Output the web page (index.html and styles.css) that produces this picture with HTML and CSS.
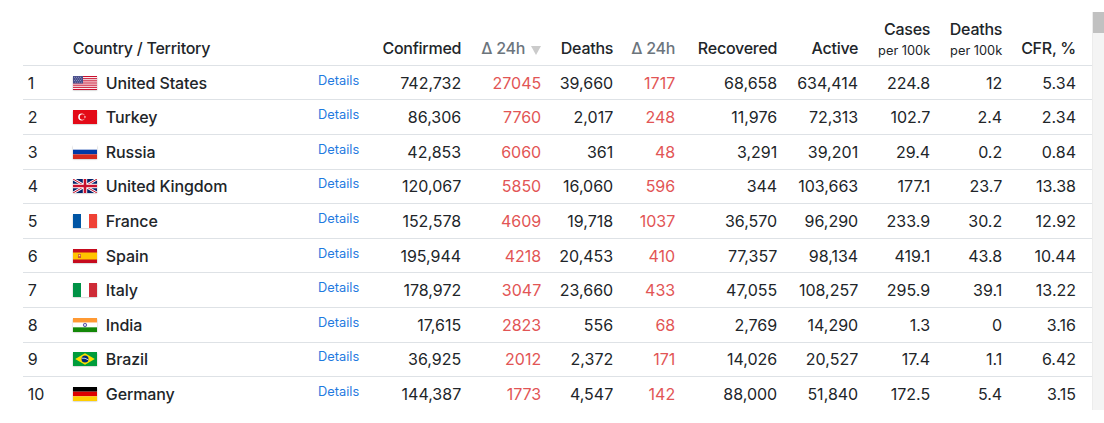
FILE: index.html
```html
<!DOCTYPE html>
<html lang="en">
<head>
<meta charset="utf-8">
<title>COVID-19 cases by country</title>
<link rel="stylesheet" href="styles.css">
</head>
<body>
<div class="frame">
<div class="viewport">
<table class="cases">
<colgroup>
<col class="c-idx"><col class="c-country"><col class="c-details"><col class="c-conf"><col class="c-d24"><col class="c-deaths"><col class="c-dd24"><col class="c-rec"><col class="c-act"><col class="c-cp"><col class="c-dp"><col class="c-cfr">
</colgroup>
<thead>
<tr>
<th></th>
<th class="left">Country / Territory</th>
<th></th>
<th>Confirmed</th>
<th class="muted">Δ 24h<svg class="sort" viewBox="0 0 10 9" width="10" height="9"><polygon points="0,0 10,0 5,9"/></svg></th>
<th>Deaths</th>
<th class="muted">Δ 24h</th>
<th>Recovered</th>
<th>Active</th>
<th>Cases<small class="sub">per 100k</small></th>
<th>Deaths<small class="sub">per 100k</small></th>
<th class="last">CFR, %</th>
</tr>
</thead>
<tbody>
<tr>
<td class="left">1</td>
<td class="left name"><svg class="flag" viewBox="0 0 24 14" width="24" height="14"><rect width="24" height="14" fill="#fff"/><g fill="#c8102e"><rect y="0" width="24" height="1.08"/><rect y="2.15" width="24" height="1.08"/><rect y="4.31" width="24" height="1.08"/><rect y="6.46" width="24" height="1.08"/><rect y="8.62" width="24" height="1.08"/><rect y="10.77" width="24" height="1.08"/><rect y="12.92" width="24" height="1.08"/></g><rect width="10" height="7.5" fill="#4a4f8c"/><g fill="#c9cde6"><circle cx="1.5" cy="1.3" r=".45"/><circle cx="3.5" cy="1.3" r=".45"/><circle cx="5.5" cy="1.3" r=".45"/><circle cx="7.5" cy="1.3" r=".45"/><circle cx="2.5" cy="2.9" r=".45"/><circle cx="4.5" cy="2.9" r=".45"/><circle cx="6.5" cy="2.9" r=".45"/><circle cx="8.5" cy="2.9" r=".45"/><circle cx="1.5" cy="4.5" r=".45"/><circle cx="3.5" cy="4.5" r=".45"/><circle cx="5.5" cy="4.5" r=".45"/><circle cx="7.5" cy="4.5" r=".45"/><circle cx="2.5" cy="6.1" r=".45"/><circle cx="4.5" cy="6.1" r=".45"/><circle cx="6.5" cy="6.1" r=".45"/><circle cx="8.5" cy="6.1" r=".45"/></g></svg>United States</td>
<td class="details"><a href="#">Details</a></td>
<td>742,732</td><td class="red">27045</td><td>39,660</td><td class="red">1717</td><td>68,658</td><td>634,414</td><td>224.8</td><td>12</td><td class="last">5.34</td>
</tr>
<tr>
<td class="left">2</td>
<td class="left name"><svg class="flag" viewBox="0 0 24 14" width="24" height="14"><rect width="24" height="14" fill="#e30a17"/><circle cx="8.6" cy="7" r="3.4" fill="#fff"/><circle cx="9.5" cy="7" r="2.7" fill="#e30a17"/><polygon points="13.2,7 10.9,7.8 12.3,5.8 12.3,8.2 10.9,6.2" fill="#fff"/></svg>Turkey</td>
<td class="details"><a href="#">Details</a></td>
<td>86,306</td><td class="red">7760</td><td>2,017</td><td class="red">248</td><td>11,976</td><td>72,313</td><td>102.7</td><td>2.4</td><td class="last">2.34</td>
</tr>
<tr>
<td class="left">3</td>
<td class="left name"><svg class="flag" viewBox="0 0 24 14" width="24" height="14"><rect width="24" height="4.67" fill="#fff"/><rect y="4.67" width="24" height="4.67" fill="#0039a6"/><rect y="9.33" width="24" height="4.67" fill="#d52b1e"/></svg>Russia</td>
<td class="details"><a href="#">Details</a></td>
<td>42,853</td><td class="red">6060</td><td>361</td><td class="red">48</td><td>3,291</td><td>39,201</td><td>29.4</td><td>0.2</td><td class="last">0.84</td>
</tr>
<tr>
<td class="left">4</td>
<td class="left name"><svg class="flag" viewBox="0 0 24 14" width="24" height="14"><rect width="24" height="14" fill="#012169"/><path d="M0,0 L24,14 M24,0 L0,14" stroke="#fff" stroke-width="2.8"/><path d="M0,0 L24,14 M24,0 L0,14" stroke="#c8102e" stroke-width="1"/><path d="M12,0 V14 M0,7 H24" stroke="#fff" stroke-width="4.4"/><path d="M12,0 V14 M0,7 H24" stroke="#c8102e" stroke-width="2.6"/></svg>United Kingdom</td>
<td class="details"><a href="#">Details</a></td>
<td>120,067</td><td class="red">5850</td><td>16,060</td><td class="red">596</td><td>344</td><td>103,663</td><td>177.1</td><td>23.7</td><td class="last">13.38</td>
</tr>
<tr>
<td class="left">5</td>
<td class="left name"><svg class="flag" viewBox="0 0 24 14" width="24" height="14"><rect width="8" height="14" fill="#0055a4"/><rect x="8" width="8" height="14" fill="#fff"/><rect x="16" width="8" height="14" fill="#ef4135"/></svg>France</td>
<td class="details"><a href="#">Details</a></td>
<td>152,578</td><td class="red">4609</td><td>19,718</td><td class="red">1037</td><td>36,570</td><td>96,290</td><td>233.9</td><td>30.2</td><td class="last">12.92</td>
</tr>
<tr>
<td class="left">6</td>
<td class="left name"><svg class="flag" viewBox="0 0 24 14" width="24" height="14"><rect width="24" height="14" fill="#c60b1e"/><rect y="3.5" width="24" height="7" fill="#ffc400"/><rect x="5" y="5" width="3" height="4" rx=".6" fill="#c8553a"/><rect x="5.8" y="5.8" width="1.4" height="1.4" fill="#f7e3a0"/></svg>Spain</td>
<td class="details"><a href="#">Details</a></td>
<td>195,944</td><td class="red">4218</td><td>20,453</td><td class="red">410</td><td>77,357</td><td>98,134</td><td>419.1</td><td>43.8</td><td class="last">10.44</td>
</tr>
<tr>
<td class="left">7</td>
<td class="left name"><svg class="flag" viewBox="0 0 24 14" width="24" height="14"><rect width="8" height="14" fill="#009246"/><rect x="8" width="8" height="14" fill="#fff"/><rect x="16" width="8" height="14" fill="#ce2b37"/></svg>Italy</td>
<td class="details"><a href="#">Details</a></td>
<td>178,972</td><td class="red">3047</td><td>23,660</td><td class="red">433</td><td>47,055</td><td>108,257</td><td>295.9</td><td>39.1</td><td class="last">13.22</td>
</tr>
<tr>
<td class="left">8</td>
<td class="left name"><svg class="flag" viewBox="0 0 24 14" width="24" height="14"><rect width="24" height="4.67" fill="#ff9933"/><rect y="4.67" width="24" height="4.67" fill="#fff"/><rect y="9.33" width="24" height="4.67" fill="#138808"/><circle cx="12" cy="7" r="1.7" fill="none" stroke="#000080" stroke-width=".6"/><circle cx="12" cy="7" r=".5" fill="#000080"/></svg>India</td>
<td class="details"><a href="#">Details</a></td>
<td>17,615</td><td class="red">2823</td><td>556</td><td class="red">68</td><td>2,769</td><td>14,290</td><td>1.3</td><td>0</td><td class="last">3.16</td>
</tr>
<tr>
<td class="left">9</td>
<td class="left name"><svg class="flag" viewBox="0 0 24 14" width="24" height="14"><rect width="24" height="14" fill="#009c3b"/><polygon points="2.2,7 12,1.3 21.8,7 12,12.7" fill="#ffdf00"/><circle cx="12" cy="7" r="3.5" fill="#002776"/><path d="M8.7,6.2 Q12,5.6 15.3,7.8" stroke="#fff" stroke-width=".8" fill="none"/></svg>Brazil</td>
<td class="details"><a href="#">Details</a></td>
<td>36,925</td><td class="red">2012</td><td>2,372</td><td class="red">171</td><td>14,026</td><td>20,527</td><td>17.4</td><td>1.1</td><td class="last">6.42</td>
</tr>
<tr>
<td class="left">10</td>
<td class="left name"><svg class="flag" viewBox="0 0 24 14" width="24" height="14"><rect width="24" height="4.67" fill="#000"/><rect y="4.67" width="24" height="4.67" fill="#dd0000"/><rect y="9.33" width="24" height="4.67" fill="#ffce00"/></svg>Germany</td>
<td class="details"><a href="#">Details</a></td>
<td>144,387</td><td class="red">1773</td><td>4,547</td><td class="red">142</td><td>88,000</td><td>51,840</td><td>172.5</td><td>5.4</td><td class="last">3.15</td>
</tr>
</tbody>
</table>
</div>
<div class="scrollbar"><div class="thumb"></div></div>
</div>
</body>
</html>
```

FILE: styles.css
```css
html, body {
  margin: 0;
  background: #fff;
}

body {
  font-family: Inter, "Liberation Sans", sans-serif;
  font-size: 16px;
  line-height: 1.5;
  color: #212529;
}

.frame {
  display: flex;
  margin-top: 12px;
  height: 398px;
}

.viewport {
  flex: 1;
  min-width: 0;
  overflow: hidden;
  padding-left: 23px;
}

.scrollbar {
  width: 12px;
  flex: none;
  background: #f4f4f4;
  border-left: 1px solid #ececec;
  box-sizing: border-box;
}

.thumb {
  height: 21px;
  background: #c1c1c1;
}

.cases {
  width: 1069px;
  table-layout: fixed;
  border-collapse: collapse;
}

.c-idx { width: 45px; }
.c-country { width: 242px; }
.c-details { width: 54px; }
.c-conf { width: 102px; }
.c-d24 { width: 80px; }
.c-deaths { width: 72px; }
.c-dd24 { width: 62px; }
.c-rec { width: 102px; }
.c-act { width: 81px; }
.c-cp { width: 72px; }
.c-dp { width: 72px; }
.c-cfr { width: 85px; }

.cases th,
.cases td {
  padding: 4.8px;
  text-align: right;
  white-space: nowrap;
}

.cases th {
  font-weight: 500;
  letter-spacing: -0.25px;
  vertical-align: bottom;
  border-bottom: 1px solid #dee2e6;
}

.cases td {
  vertical-align: top;
  border-top: 1px solid #dee2e6;
}

.cases .left {
  text-align: left;
}

.cases .last {
  padding-right: 16px;
}

.muted {
  color: #6c757d;
}

.sort {
  margin-left: 6px;
  fill: #cbcbcb;
  vertical-align: -1px;
}

.sub {
  display: block;
  font-size: 12.8px;
  line-height: 1.5;
  font-weight: 400;
  letter-spacing: 0;
}

.name {
  font-weight: 500;
  letter-spacing: -0.1px;
}

.flag {
  display: inline-block;
  vertical-align: -1px;
  margin-right: 9px;
  box-shadow: 0 0.5px 1.5px rgba(0, 0, 0, 0.35);
}

.details {
  font-size: 12.8px;
}

.details a {
  color: #1f7ae0;
  text-decoration: none;
}

.red {
  color: #e25555;
}
```
